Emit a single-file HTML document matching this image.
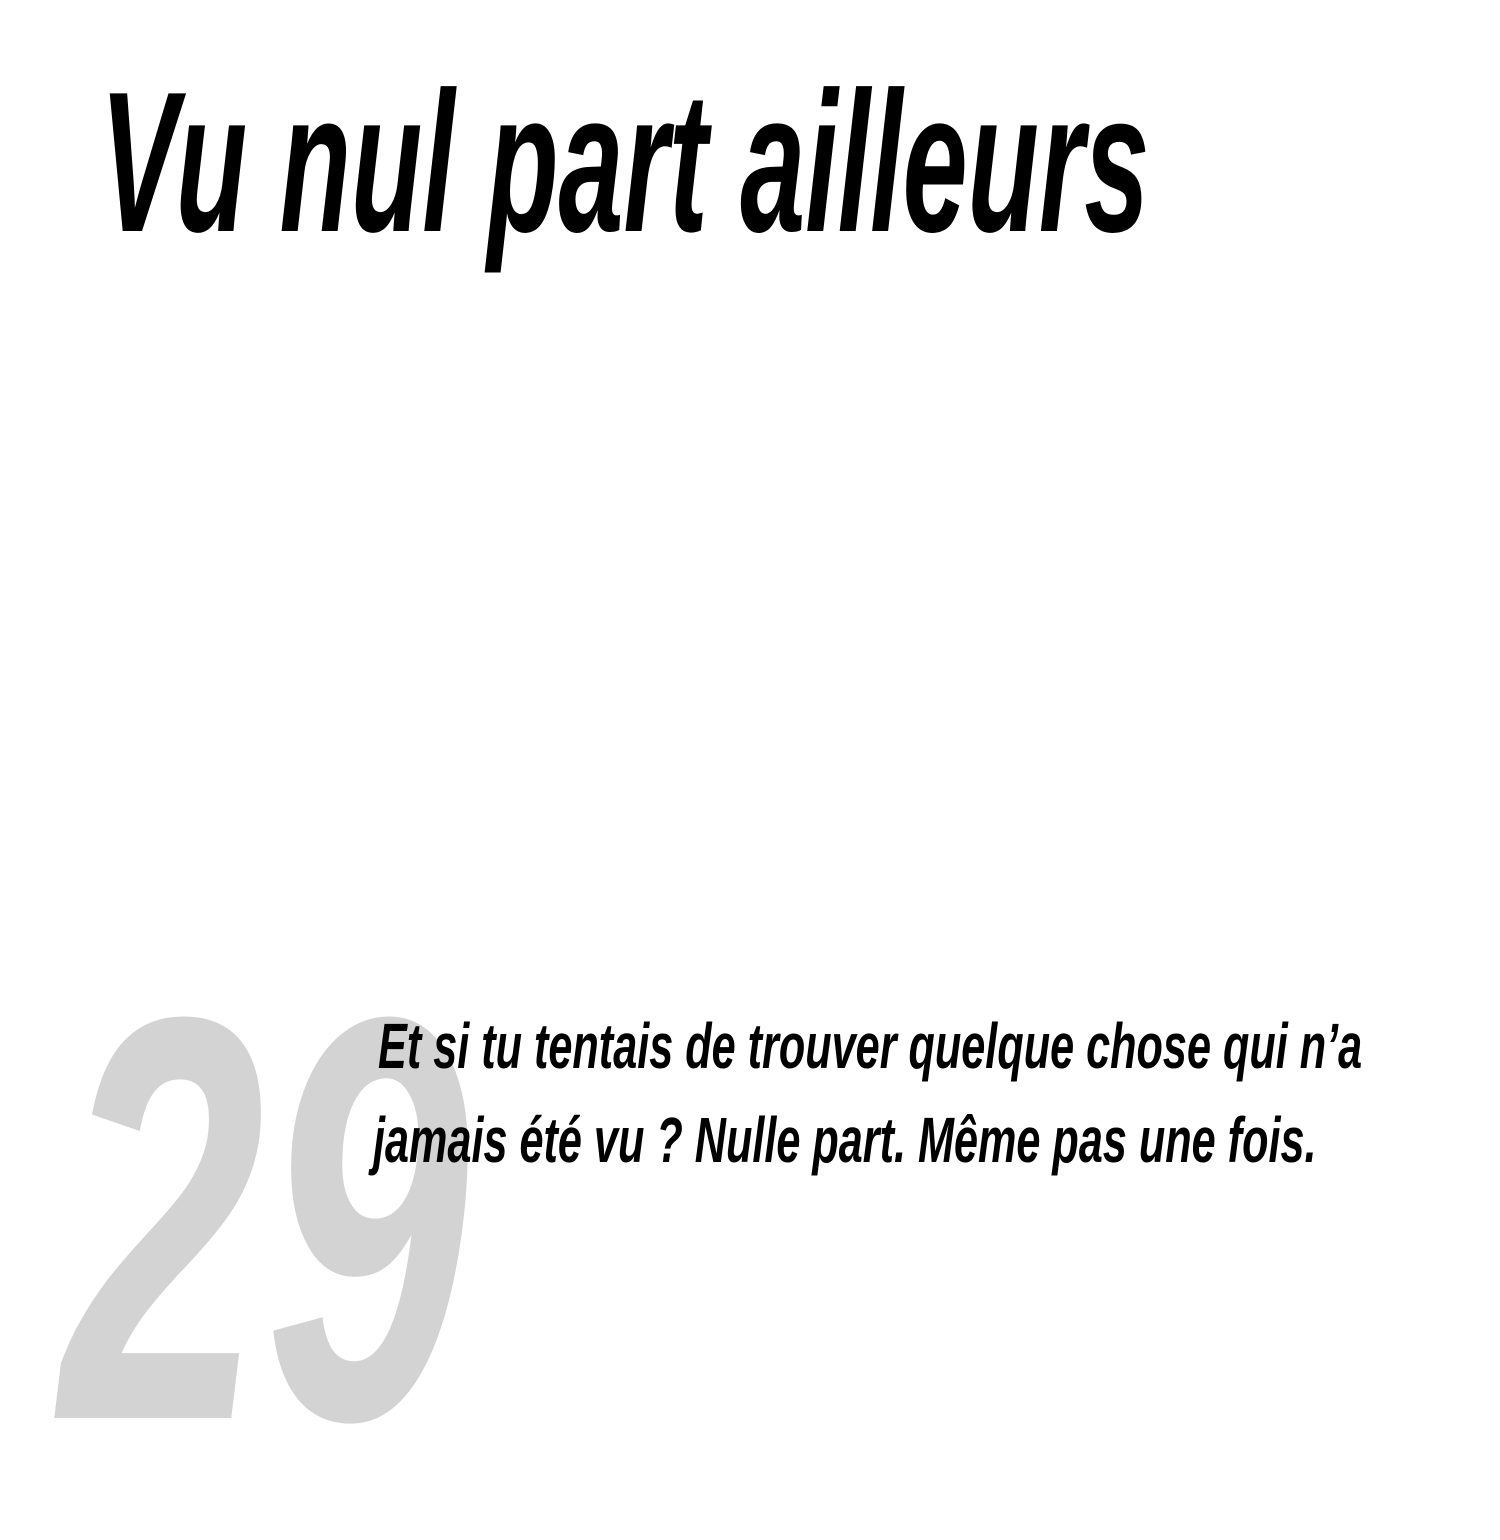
<!DOCTYPE html>
<html><head><meta charset="utf-8"><style>
html,body{margin:0;padding:0;background:#fff;width:1500px;height:1500px;overflow:hidden;}
.t{position:absolute;white-space:nowrap;font-family:"Liberation Sans",sans-serif;font-weight:bold;font-style:italic;line-height:1;transform-origin:0 0;}
</style></head><body>
<div class="t" style="left:100px;top:63px;font-size:200px;transform:scaleX(0.584);color:#000;">Vu nul part ailleurs</div>
<div class="t" style="left:60px;top:931px;font-size:575px;transform:scaleX(0.64);color:#d3d3d3;">29</div>
<div class="t" style="left:378px;top:1014px;font-size:64px;transform:scaleX(0.675);color:#000;">Et si tu tentais de trouver quelque chose qui n’a</div>
<div class="t" style="left:373px;top:1108px;font-size:64px;transform:scaleX(0.675);color:#000;">jamais été vu ? Nulle part. Même pas une fois.</div>
</body></html>
